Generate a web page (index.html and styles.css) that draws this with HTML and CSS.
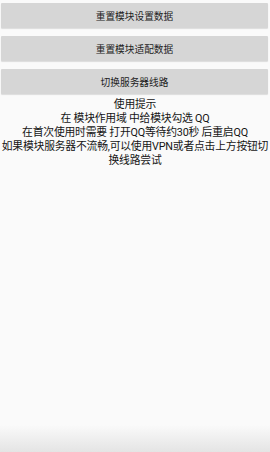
FILE: index.html
```html
<!DOCTYPE html>
<html lang="zh-CN">

<head>
    <meta charset="UTF-8">
    <meta name="viewport" content="width=device-width, initial-scale=1.0">
    <title>模块设置</title>
    <link rel="stylesheet" href="styles.css">
</head>

<body>

    <div class="actions">
        <button class="action-button">重置模块设置数据</button>
        <button class="action-button">重置模块适配数据</button>
        <button class="action-button">切换服务器线路</button>
    </div>

    <p class="tips">
        使用提示<br>
        在 模块作用域 中给模块勾选 QQ<br>
        在首次使用时需要 打开QQ等待约30秒 后重启QQ<br>
        如果模块服务器不流畅,可以使用VPN或者点击上方按钮切换线路尝试
    </p>

</body>

</html>
```

FILE: styles.css
```css
html,
body {
    height: 100%;
}

body {
    margin: 0;
    font-family: Roboto, "Noto Sans CJK SC", sans-serif;
    color: #222222;
    background: linear-gradient(to bottom, #fafafa 0, #fafafa 425px, #e4e4e4 100%);
}

.actions {
    display: flex;
    flex-direction: column;
    gap: 8px;
    padding: 3px 2px 0 1px;
}

.action-button {
    height: 25px;
    border: none;
    border-radius: 1px;
    background-color: #d6d6d6;
    box-shadow: 0 1px 1px rgba(0, 0, 0, 0.12);
    font-family: Roboto, "Noto Sans CJK SC", sans-serif;
    font-size: 9.7px;
    color: #222222;
    padding: 0;
}

.tips {
    margin: 4px 0 0;
    text-align: center;
    font-size: 10.8px;
    letter-spacing: -0.2px;
    line-height: 14px;
    color: #151515;
}
```
